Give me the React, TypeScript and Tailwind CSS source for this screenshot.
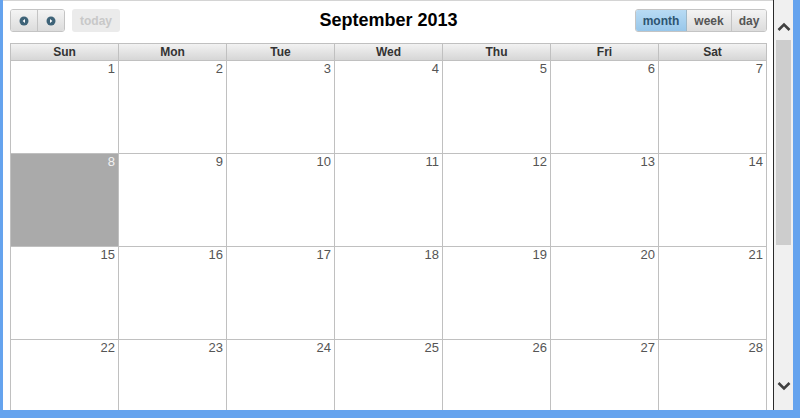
const days = ["Sun", "Mon", "Tue", "Wed", "Thu", "Fri", "Sat"]
const weeks = [
    [1, 2, 3, 4, 5, 6, 7],
    [8, 9, 10, 11, 12, 13, 14],
    [15, 16, 17, 18, 19, 20, 21],
    [22, 23, 24, 25, 26, 27, 28],
]

function NavIcon({ dir }: { dir: "left" | "right" }) {
    return (
        <svg width="10" height="10" viewBox="0 0 10 10">
            <circle cx="5" cy="5" r="4.5" fill="#3e6378" />
            {dir === "left" ? (
                <path d="M6 3 L3.6 5 L6 7 Z" fill="#fff" />
            ) : (
                <path d="M4 3 L6.4 5 L4 7 Z" fill="#fff" />
            )}
        </svg>
    )
}

function Arrow({ up }: { up?: boolean }) {
    return (
        <svg width="14" height="10" viewBox="0 0 14 10">
            <path
                d={up ? "M1.5 8 L7 2.5 L12.5 8" : "M1.5 2 L7 7.5 L12.5 2"}
                fill="none"
                stroke="#404040"
                strokeWidth="2.6"
            />
        </svg>
    )
}

export default function App() {
    return (
        <div
            className="w-[800px] h-[418px] flex flex-col bg-[#65a3ee] overflow-hidden"
            style={{ fontFamily: '"Liberation Sans", Arial, sans-serif' }}
        >
            <div className="flex h-[410px] shrink-0">
                <div className="w-[3px]" />
                <div className="flex-1 bg-white border-t border-[#d4d4d4] pl-[7px] pr-[6px] pt-[8px] overflow-hidden">
                    <div className="flex items-center justify-between h-[23px]">
                        <div className="flex items-center gap-[7px]">
                            <div className="flex h-[23px] rounded-[3px] border border-[#c4c4c4] overflow-hidden">
                                <button className="w-[27px] flex items-center justify-center bg-gradient-to-b from-[#f4f4f4] to-[#dcdcdc] border-r border-[#c4c4c4]">
                                    <NavIcon dir="left" />
                                </button>
                                <button className="w-[26px] flex items-center justify-center bg-gradient-to-b from-[#f4f4f4] to-[#dcdcdc]">
                                    <NavIcon dir="right" />
                                </button>
                            </div>
                            <button className="w-[48px] h-[23px] rounded-[3px] bg-[#ebebeb] text-[#c8c8c8] font-bold text-[12px]">
                                today
                            </button>
                        </div>
                        <div className="text-[18px] font-bold text-black pl-[22px]">
                            September 2013
                        </div>
                        <div className="flex h-[23px] rounded-[3px] border border-[#c4c4c4] overflow-hidden text-[12px] font-bold">
                            <button className="w-[51px] bg-gradient-to-b from-[#b8dbf4] to-[#98c7ea] text-[#2d5470] border-r border-[#9fb8c8]">
                                month
                            </button>
                            <button className="w-[45px] bg-gradient-to-b from-[#f4f4f4] to-[#dcdcdc] text-[#555] border-r border-[#c4c4c4]">
                                week
                            </button>
                            <button className="w-[34px] bg-gradient-to-b from-[#f4f4f4] to-[#dcdcdc] text-[#555]">
                                day
                            </button>
                        </div>
                    </div>
                    <div className="mt-[11px] border-l border-t border-[#c0c0c0]">
                        <div className="grid grid-cols-7">
                            {days.map((d) => (
                                <div
                                    key={d}
                                    className="h-[17px] flex items-center justify-center border-r border-b border-[#c0c0c0] bg-gradient-to-b from-[#f2f2f2] to-[#d6d6d6] text-[12px] font-bold text-[#333]"
                                >
                                    {d}
                                </div>
                            ))}
                        </div>
                        {weeks.map((w, i) => (
                            <div key={i} className="grid grid-cols-7">
                                {w.map((n) => (
                                    <div
                                        key={n}
                                        className={
                                            n === 8
                                                ? "h-[93px] border-r border-b border-[#c0c0c0] bg-[#aaaaaa] text-right pr-[3px] text-[13px] leading-[16px] text-[#f2f2f2]"
                                                : "h-[93px] border-r border-b border-[#c0c0c0] bg-white text-right pr-[3px] text-[13px] leading-[16px] text-[#555]"
                                        }
                                    >
                                        {n}
                                    </div>
                                ))}
                            </div>
                        ))}
                    </div>
                </div>
                <div className="w-[20px] h-[410px] bg-[#f0f0f0] border-l border-[#2a2a2a] grid grid-rows-[40px_205px_1fr_40px] justify-items-center">
                    <div className="w-full flex items-end justify-center pb-[8px]">
                        <Arrow up />
                    </div>
                    <div className="w-[15px] bg-[#cdcdcd]" />
                    <div />
                    <div className="w-full flex items-start justify-center pt-[11px]">
                        <Arrow />
                    </div>
                </div>
                <div className="w-[7px]" />
            </div>
            <div className="h-[8px] shrink-0" />
        </div>
    )
}
